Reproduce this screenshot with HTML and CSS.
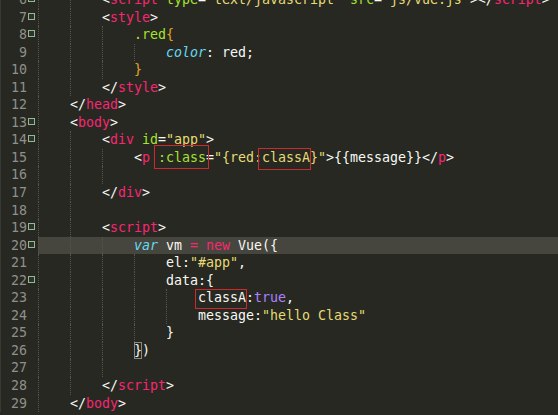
FILE: index.html
```html
<!DOCTYPE html>
<html>
<head>
<meta charset="utf-8">
<link rel="stylesheet" href="styles.css">
</head>
<body>
<div class="editor">
<div class="ln"><span class="num">6</span><span class="fold on"></span><span class="code"><span class="ind"></span><span class="ind"></span>&lt;<span class="t">script</span> <span class="a">type</span>=<span class="s">"text/javascript"</span> <span class="a">src</span>=<span class="s">"js/vue.js"</span>&gt;&lt;/<span class="t">script</span>&gt;</span></div>
<div class="ln"><span class="num">7</span><span class="fold on"></span><span class="code"><span class="ind"></span><span class="ind"></span>&lt;<span class="t">style</span>&gt;</span></div>
<div class="ln"><span class="num">8</span><span class="fold on"></span><span class="code"><span class="ind"></span><span class="ind"></span><span class="ind"></span><span class="a">.red</span><span class="o">{</span></span></div>
<div class="ln"><span class="num">9</span><span class="fold"></span><span class="code"><span class="ind"></span><span class="ind"></span><span class="ind"></span><span class="ind"></span><span class="i">color</span>: red;</span></div>
<div class="ln"><span class="num">10</span><span class="fold"></span><span class="code"><span class="ind"></span><span class="ind"></span><span class="ind"></span><span class="o">}</span></span></div>
<div class="ln"><span class="num">11</span><span class="fold"></span><span class="code"><span class="ind"></span><span class="ind"></span>&lt;/<span class="t">style</span>&gt;</span></div>
<div class="ln"><span class="num">12</span><span class="fold"></span><span class="code"><span class="ind"></span>&lt;/<span class="t">head</span>&gt;</span></div>
<div class="ln"><span class="num">13</span><span class="fold on"></span><span class="code"><span class="ind"></span>&lt;<span class="t">body</span>&gt;</span></div>
<div class="ln"><span class="num">14</span><span class="fold on"></span><span class="code"><span class="ind"></span><span class="ind"></span>&lt;<span class="t">div</span> <span class="a">id</span>=<span class="s">"app"</span>&gt;</span></div>
<div class="ln"><span class="num">15</span><span class="fold"></span><span class="code"><span class="ind"></span><span class="ind"></span><span class="ind"></span>&lt;<span class="t">p</span> <span class="a box b1">:class</span>=<span class="s">"{red:<span class="box b2">classA</span>}"</span>&gt;{{message}}&lt;/<span class="t">p</span>&gt;</span></div>
<div class="ln"><span class="num">16</span><span class="fold"></span><span class="code"><span class="ind"></span><span class="ind"></span><span class="ind"></span></span></div>
<div class="ln"><span class="num">17</span><span class="fold"></span><span class="code"><span class="ind"></span><span class="ind"></span>&lt;/<span class="t">div</span>&gt;</span></div>
<div class="ln"><span class="num">18</span><span class="fold"></span><span class="code"><span class="ind"></span><span class="ind"></span></span></div>
<div class="ln"><span class="num">19</span><span class="fold on"></span><span class="code"><span class="ind"></span><span class="ind"></span>&lt;<span class="t">script</span>&gt;</span></div>
<div class="ln cur"><span class="num">20</span><span class="fold on"></span><span class="code"><span class="ind"></span><span class="ind"></span><span class="ind"></span><span class="i">var</span> vm <span class="t">=</span> <span class="t">new</span> Vue({</span></div>
<div class="ln"><span class="num">21</span><span class="fold"></span><span class="code"><span class="ind"></span><span class="ind"></span><span class="ind"></span><span class="ind"></span>el:<span class="s">"#app"</span>,</span></div>
<div class="ln"><span class="num">22</span><span class="fold on"></span><span class="code"><span class="ind"></span><span class="ind"></span><span class="ind"></span><span class="ind"></span>data:{</span></div>
<div class="ln"><span class="num">23</span><span class="fold"></span><span class="code"><span class="ind"></span><span class="ind"></span><span class="ind"></span><span class="ind"></span><span class="ind"></span><span class="box b3">classA</span>:<span class="n">true</span>,</span></div>
<div class="ln"><span class="num">24</span><span class="fold"></span><span class="code"><span class="ind"></span><span class="ind"></span><span class="ind"></span><span class="ind"></span><span class="ind"></span>message:<span class="s">"hello Class"</span></span></div>
<div class="ln"><span class="num">25</span><span class="fold"></span><span class="code"><span class="ind"></span><span class="ind"></span><span class="ind"></span><span class="ind"></span>}</span></div>
<div class="ln"><span class="num">26</span><span class="fold"></span><span class="code"><span class="ind"></span><span class="ind"></span><span class="ind"></span><span class="match">}</span>)</span></div>
<div class="ln"><span class="num">27</span><span class="fold"></span><span class="code"><span class="ind"></span><span class="ind"></span><span class="ind"></span></span></div>
<div class="ln"><span class="num">28</span><span class="fold"></span><span class="code"><span class="ind"></span><span class="ind"></span>&lt;/<span class="t">script</span>&gt;</span></div>
<div class="ln"><span class="num">29</span><span class="fold"></span><span class="code"><span class="ind"></span>&lt;/<span class="t">body</span>&gt;</span></div>
</div>
</body>
</html>
```
FILE: styles.css
```css
html, body {
  margin: 0;
  padding: 0;
  background: #272822;
  overflow: hidden;
  height: 100%;
}
.editor {
  margin-top: -9px;
  border-left: 1px solid #3a3a35;
  font-family: "DejaVu Sans Mono", monospace;
  font-size: 13.29px;
  line-height: 17.55px;
  color: #f8f8f2;
}
.ln {
  display: flex;
  height: 17.55px;
  white-space: pre;
}
.num {
  width: 26px;
  text-align: right;
  color: #8f908a;
  flex: none;
}
.fold {
  width: 11px;
  flex: none;
  position: relative;
}
.fold.on::before {
  content: "";
  position: absolute;
  left: 1px;
  top: 4px;
  width: 5px;
  height: 5px;
  border: 1px solid #94b894;
  background: #2c332a;
}
.code {
  flex: 1;
  min-width: 0;
}
.cur .code {
  background: #46463e;
}
.ind {
  display: inline-block;
  box-sizing: border-box;
  width: 32px;
  height: 17.55px;
  vertical-align: top;
  border-left: 1px dotted #55554c;
}
.t { color: #f92672; }
.a { color: #a6e22e; }
.s { color: #e6db74; }
.i { color: #66d9ef; font-style: italic; }
.n { color: #ae81ff; }
.o { color: #e3a326; }
.box { position: relative; }
.box::after {
  content: "";
  position: absolute;
  border: 1px solid #cc2b2b;
}
.b1::after { left: -4.5px; right: -3px; top: -4.6px; bottom: -4.4px; }
.b2::after { left: -3.5px; right: -1.5px; top: -1.6px; bottom: -4.9px; }
.b3::after { left: -3px; right: -0.7px; top: -1.6px; bottom: -3.4px; }
.match {
  display: inline-block;
  box-sizing: border-box;
  height: 17.55px;
  vertical-align: top;
  outline: 1px solid #8a8a80;
  outline-offset: -1px;
}
```
